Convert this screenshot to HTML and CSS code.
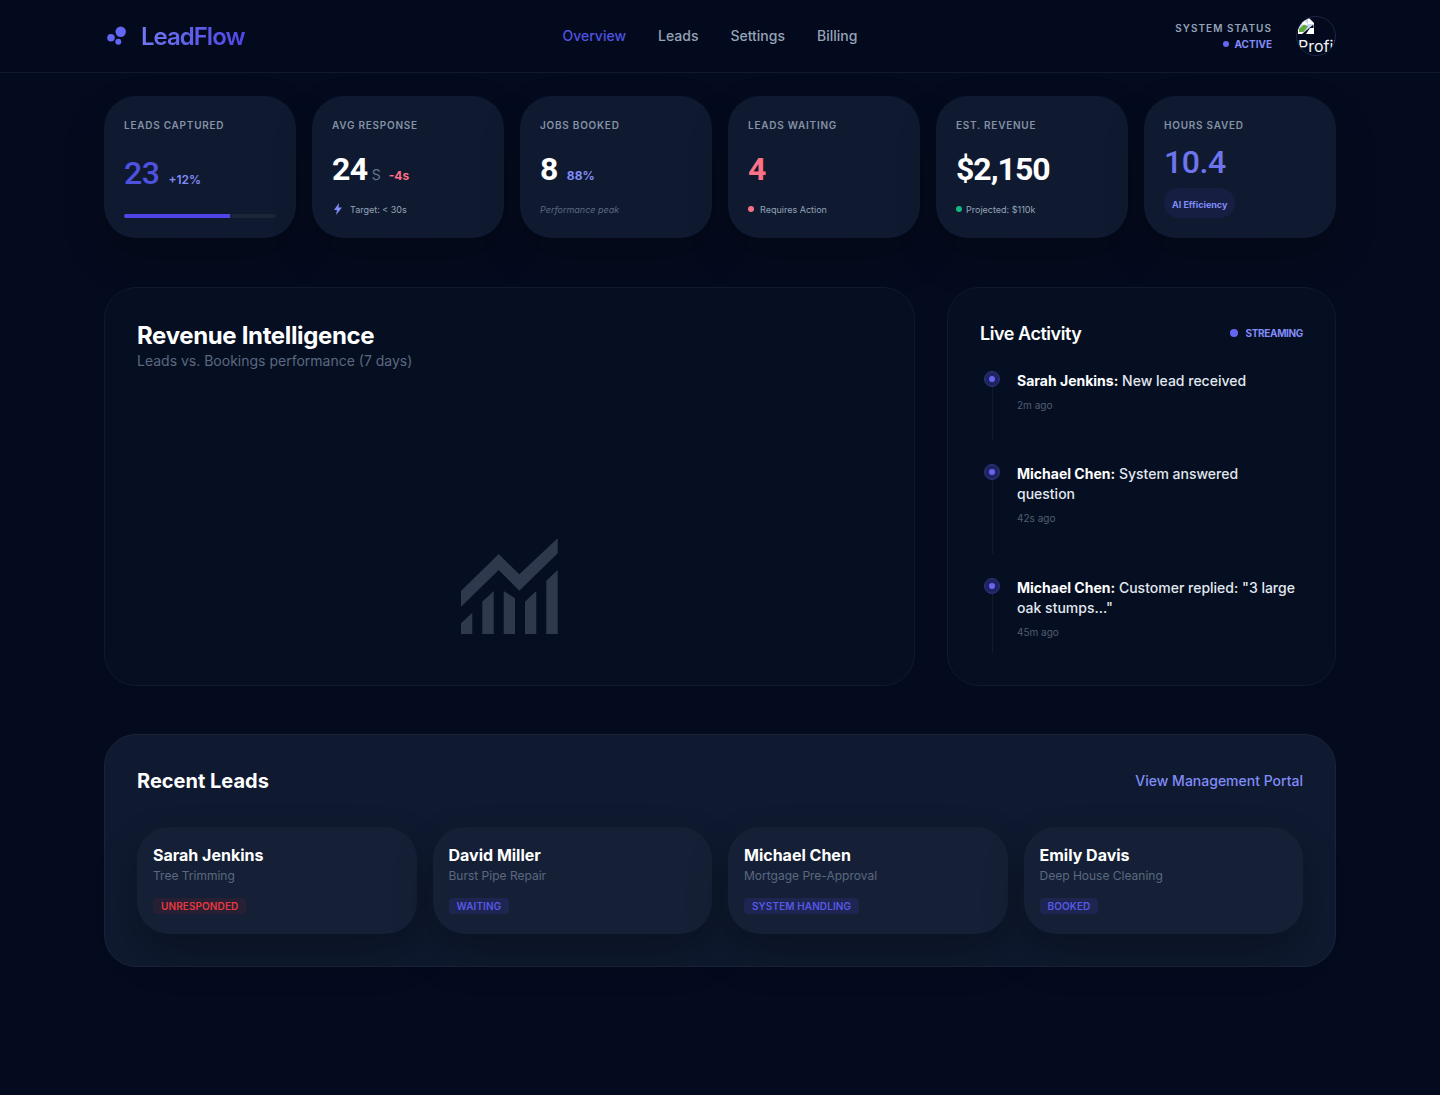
FILE: index.html
```html
<!DOCTYPE html>
<html lang="en">
<head>
<meta charset="utf-8">
<title>LeadFlow</title>
<link rel="stylesheet" href="styles.css">
</head>
<body>
<header class="topbar">
  <div class="topbar-inner">
    <div class="brand">
      <svg class="brand-mark" viewBox="0 0 24 24" width="24" height="24"><circle cx="14.7" cy="7.7" r="5.2" fill="#6366f1"/><circle cx="5" cy="13.7" r="3.8" fill="#6366f1"/><circle cx="12.3" cy="17.7" r="3" fill="#6366f1"/></svg>
      <span class="brand-name">LeadFlow</span>
    </div>
    <nav class="nav">
      <a class="nav-link active">Overview</a>
      <a class="nav-link">Leads</a>
      <a class="nav-link">Settings</a>
      <a class="nav-link">Billing</a>
    </nav>
    <div class="account">
      <div class="status">
        <div class="status-label">SYSTEM STATUS</div>
        <div class="status-value"><i class="dot dot-indigo"></i>ACTIVE</div>
      </div>
      <div class="avatar">
        <svg class="broken" viewBox="0 0 16 16" width="16" height="16"><path d="M0 0h11l5 5v11H0z" fill="#fff"/><path d="M1 1h9v5h5v2L8 14H1z" fill="#c9d8f3"/><path d="M4 5.500a2 2 0 0 1 4-1 1.500 1.500 0 0 1 1 2.500H5a1 1 0 0 1-1-1.500z" fill="#fff"/><path d="M1 14v-3l5-4.500 4 2L5.500 14z" fill="#5fa83b"/><path d="M4 16L15.500 6.500V10H12L8 16z" fill="#030a1e"/><path d="M16 10v6H9z" fill="#fff"/></svg>
        <span class="avatar-alt">Profile</span>
      </div>
    </div>
  </div>
</header>

<main class="page">
  <section class="stats">
    <article class="stat">
      <h3 class="stat-label">LEADS CAPTURED</h3>
      <div class="stat-row stat-row-low"><span class="num num-indigo">23</span><span class="delta delta-plain">+12%</span></div>
      <div class="progress"><div class="progress-fill"></div></div>
    </article>
    <article class="stat">
      <h3 class="stat-label">AVG RESPONSE</h3>
      <div class="stat-row"><span class="num">24</span><span class="unit">s</span><span class="delta delta-red">-4s</span></div>
      <div class="foot foot-bolt"><svg viewBox="0 0 8 12" width="8" height="12"><path d="M5 0L0 7h3l-1 5 6-7.500H4.500z" fill="#818cf8"/></svg>Target: &lt; 30s</div>
    </article>
    <article class="stat">
      <h3 class="stat-label">JOBS BOOKED</h3>
      <div class="stat-row"><span class="num">8</span><span class="delta delta-indigo">88%</span></div>
      <div class="foot foot-italic">Performance peak</div>
    </article>
    <article class="stat">
      <h3 class="stat-label">LEADS WAITING</h3>
      <div class="stat-row"><span class="num num-red">4</span></div>
      <div class="foot"><i class="dot dot-red"></i>Requires Action</div>
    </article>
    <article class="stat">
      <h3 class="stat-label">EST. REVENUE</h3>
      <div class="stat-row"><span class="num num-money">$2,150</span></div>
      <div class="foot foot-tight"><i class="dot dot-green"></i>Projected: $110k</div>
    </article>
    <article class="stat">
      <h3 class="stat-label">HOURS SAVED</h3>
      <div class="stat-row stat-row-high"><span class="num num-light">10.4</span></div>
      <span class="pill">AI Efficiency</span>
    </article>
  </section>

  <section class="panels">
    <div class="panel chart-panel">
      <h2 class="chart-title">Revenue Intelligence</h2>
      <p class="chart-sub">Leads vs. Bookings performance (7 days)</p>
      <div class="chart-area">
        <svg viewBox="0 0 97 96" width="97" height="96"><path d="M0 53L37.700 16 58.300 36.300 96.700 .3V15.300L58.300 52.700 37.700 32 0 68.700zM0 85.300L11.300 74.700V96H0zM21.300 63.700L32.700 53V96H21.300zM42.700 53L54 60.300V96H42.700zM64 63.700L75.300 53V96H64zM85.300 42.700L96.700 32V96H85.300z" fill="#2f394d"/></svg>
      </div>
    </div>
    <div class="panel activity-panel">
      <div class="activity-head">
        <h2 class="activity-title">Live Activity</h2>
        <span class="streaming"><i class="dot dot-stream"></i>STREAMING</span>
      </div>
      <ul class="feed">
        <li class="feed-item feed-one">
          <div class="rail"><span class="node"></span><span class="rail-line"></span></div>
          <div class="feed-body"><p class="feed-text"><b>Sarah Jenkins:</b> New lead received</p><time class="feed-time">2m ago</time></div>
        </li>
        <li class="feed-item feed-two">
          <div class="rail"><span class="node"></span><span class="rail-line"></span></div>
          <div class="feed-body"><p class="feed-text"><b>Michael Chen:</b> System answered question</p><time class="feed-time">42s ago</time></div>
        </li>
        <li class="feed-item feed-last">
          <div class="rail"><span class="node"></span><span class="rail-line"></span></div>
          <div class="feed-body"><p class="feed-text"><b>Michael Chen:</b> Customer replied: "3 large oak stumps..."</p><time class="feed-time">45m ago</time></div>
        </li>
      </ul>
    </div>
  </section>

  <section class="recent">
    <div class="recent-head">
      <h2 class="recent-title">Recent Leads</h2>
      <a class="portal">View Management Portal</a>
    </div>
    <div class="lead-grid">
      <article class="lead"><h4 class="lead-name">Sarah Jenkins</h4><p class="lead-job">Tree Trimming</p><span class="tag tag-red">UNRESPONDED</span></article>
      <article class="lead"><h4 class="lead-name">David Miller</h4><p class="lead-job">Burst Pipe Repair</p><span class="tag">WAITING</span></article>
      <article class="lead"><h4 class="lead-name">Michael Chen</h4><p class="lead-job">Mortgage Pre-Approval</p><span class="tag">SYSTEM HANDLING</span></article>
      <article class="lead"><h4 class="lead-name">Emily Davis</h4><p class="lead-job">Deep House Cleaning</p><span class="tag">BOOKED</span></article>
    </div>
  </section>
</main>
</body>
</html>
```
FILE: styles.css
```css
* { box-sizing: border-box; margin: 0; padding: 0; }
html, body { height: 100%; }
body {
  background: #050b1e;
  color: #fff;
  font-family: Inter, "Liberation Sans", sans-serif;
  min-height: 1095px;
  overflow: hidden;
}
.topbar { height: 73px; background: #040a1d; border-bottom: 1px solid #10192e; }
.topbar-inner {
  width: 1232px; height: 72px; margin: 0 auto;
  display: flex; justify-content: space-between; align-items: center;
}
.brand { display: flex; align-items: center; gap: 11px; }
.brand-mark { margin-left: 2px; }
.brand-name {
  font-size: 24px; font-weight: 600; letter-spacing: -1px;
  background: linear-gradient(90deg, #7178f3, #4f46e5);
  -webkit-background-clip: text; background-clip: text; color: transparent;
}
.nav { display: flex; gap: 32px; padding-bottom: 2px; }
.nav-link { font-size: 14px; font-weight: 500; color: #94a3b8; }
.nav-link.active { color: #4f52e0; }
.account { display: flex; align-items: center; justify-content: flex-end; gap: 24px; }
.status { text-align: right; }
.status-label { font-size: 10px; font-weight: 600; letter-spacing: 1px; color: #94a3b8; line-height: 15px; }
.status-value { font-size: 10px; font-weight: 700; color: #818cf8; line-height: 15px; margin-top: 1px; display: flex; align-items: center; justify-content: flex-end; gap: 6px; }
.dot { display: inline-block; width: 6px; height: 6px; border-radius: 50%; flex: none; }
.dot-indigo { background: #6366f1; }
.dot-red { background: #fb6f84; }
.dot-green { background: #10b981; }
.dot-stream { background: #6366f1; width: 8px; height: 8px; }
.avatar { position: relative; width: 40px; height: 40px; border-radius: 50%; border: 1px solid #1e2548; overflow: hidden; background: #040a1d; }
.broken { position: absolute; left: 1px; top: 1px; }
.avatar-alt { position: absolute; left: 1px; top: 17px; font-size: 16px; line-height: 24px; color: #f1f5f9; white-space: nowrap; }

.page { width: 1232px; margin: 0 auto; padding-top: 23px; }
.stats { display: grid; grid-template-columns: repeat(6, 192px); gap: 16px; }
.stat {
  height: 142px; padding: 20px; border-radius: 32px;
  background: #0f1a30;
  box-shadow: 0 20px 40px rgba(0,0,0,.22);
  display: flex; flex-direction: column;
}
.stat-label { font-size: 10px; font-weight: 600; letter-spacing: .75px; color: #8491a6; line-height: 18px; }
.stat-row { display: flex; align-items: baseline; margin-top: 15px; height: 40px; gap: 8px; }
.stat-row-low { margin-top: 19px; }
.stat-row-high { margin-top: 8px; }
.num { font-family: Roboto, Inter, sans-serif; font-size: 32px; font-weight: 700; line-height: 40px; color: #fff; letter-spacing: -.5px; }
.num-indigo { color: #4f52e0; font-weight: 500; }
.num-red { color: #fb7185; }
.num-light { color: #6d74ec; font-weight: 500; letter-spacing: -.4px; }
.num-money { letter-spacing: -1px; }
.unit { font-size: 14px; color: #64748b; text-transform: uppercase; margin-left: -4px; }
.delta { font-size: 12px; font-weight: 700; }
.delta-plain { color: #818cf8; font-weight: 600; margin-left: 1px; }
.delta-red { color: #fb7185; }
.delta-indigo { color: #818cf8; margin-left: 1px; }
.foot { margin-top: 12px; font-size: 9px; color: #94a3b8; display: flex; align-items: center; gap: 6px; height: 16px; }
.foot-bolt { gap: 8px; padding-left: 2px; }
.foot-tight { gap: 4px; }
.foot-italic { font-style: italic; color: #5b6880; }
.progress { margin-top: 21px; height: 4px; border-radius: 2px; background: #1c2638; overflow: hidden; }
.progress-fill { width: 70%; height: 100%; background: #4f46e5; }
.pill {
  margin-top: 6px; align-self: flex-start; padding: 0 8px; height: 30px; line-height: 34px;
  border-radius: 15px; background: #161f42; color: #818cf8; font-size: 9px; font-weight: 700;
}

.panels { display: grid; grid-template-columns: 811fr 389fr; grid-template-rows: 399px; gap: 32px; margin-top: 49px; }
.panel { background: #060f22; border: 1px solid #10192e; border-radius: 32px; padding: 32px; display: flex; flex-direction: column; }
.chart-title { font-size: 24px; font-weight: 700; letter-spacing: -0.35px; line-height: 32px; }
.chart-sub { font-size: 14px; color: #5b6880; line-height: 20px; margin-top: -1px; }
.chart-area { flex: 1; display: flex; justify-content: center; align-items: flex-end; padding-bottom: 19px; }
.activity-head { display: flex; align-items: center; justify-content: space-between; height: 28px; margin-top: -1px; }
.activity-title { font-size: 18px; font-weight: 600; letter-spacing: -0.45px; }
.streaming { display: flex; align-items: center; gap: 8px; font-size: 10px; font-weight: 700; color: #818cf8; letter-spacing: -0.35px; }
.feed { list-style: none; margin-top: 24px; }
.feed-item { display: flex; gap: 17px; height: 93px; padding-left: 4px; }
.feed-two { height: 114px; }
.feed-last { height: 75px; }
.rail { width: 16px; display: flex; flex-direction: column; align-items: center; flex: none; }
.node { width: 16px; height: 16px; border-radius: 50%; background: #1f2460; border: 1px solid #2e3480; position: relative; flex: none; }
.node::after { content: ""; position: absolute; left: 4px; top: 4px; width: 6px; height: 6px; border-radius: 50%; background: #6366f1; }
.rail-line { width: 1px; flex: 1; background: #10192e; margin-bottom: 24px; }
.feed-last .rail-line { margin-bottom: 0; }
.feed-body { padding-right: 6px; }
.feed-text { font-size: 14px; line-height: 20px; font-weight: 500; color: #e2e8f0; }
.feed-text b { font-weight: 700; color: #fff; }
.feed-time { display: block; font-size: 10px; color: #505d72; margin-top: 7px; line-height: 14px; }

.recent {
  margin-top: 48px; height: 233px; padding: 32px; border-radius: 32px;
  border: 1px solid #1a2338;
  background: #0f1a30;
}
.recent-head { display: flex; align-items: center; justify-content: space-between; height: 28px; }
.recent-title { font-size: 20px; font-weight: 700; }
.portal { font-size: 14px; font-weight: 500; color: #818cf8; padding-bottom: 2px; }
.lead-grid { display: grid; grid-template-columns: repeat(4, 1fr); gap: 16px; margin-top: 32px; }
.lead { height: 107px; padding: 16px; border-radius: 32px; background: #152036; box-shadow: 0 20px 40px rgba(0,0,0,.28); }
.lead-name { font-size: 16px; font-weight: 700; line-height: 24px; }
.lead-job { font-size: 12px; color: #5b6880; line-height: 16px; margin-top: 1px; }
.tag {
  display: inline-block; margin-top: 14px; height: 16px; line-height: 16px; padding: 0 8px;
  border-radius: 4px; background: #1e2550; color: #5659e6; font-size: 10px; font-weight: 600; letter-spacing: .1px;
}
.tag-red { background: #271f33; color: #e5393f; }
```
